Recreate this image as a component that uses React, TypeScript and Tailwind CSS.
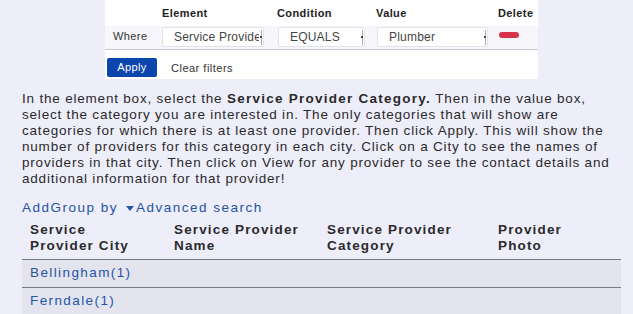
import React from "react";

const font = { fontFamily: '"Liberation Sans", Arial, sans-serif' };

function FakeSelect({ value, width }: { value: string; width: string }) {
  return (
    <div
      className={`relative flex h-[20px] items-center overflow-hidden rounded-[2px] border border-[#e2e2ea] bg-white pl-[11px] text-[12px] tracking-[0.2px] text-[#444] ${width}`}
    >
      <span className="whitespace-nowrap">{value}</span>
      <span className="absolute right-0 top-0 h-full w-[4px] bg-white" />
      <span className="absolute right-[1px] top-[2px] h-[15px] w-[1px] bg-[#aaa]" />
      <span className="absolute right-[1px] top-[8px] h-[2px] w-[2px] bg-[#444]" />
    </div>
  );
}

export default function App() {
  const rows = ["Bellingham(1)", "Ferndale(1)"];
  return (
    <div className="h-[314px] w-[633px] overflow-hidden bg-[#eeeefa]" style={font}>
      <div className="ml-[105px] w-[433px] bg-white">
        <div className="flex h-[26px] items-center text-[11px] font-bold tracking-[0.4px] text-[#222]">
          <span className="ml-[57px] w-[115px]">Element</span>
          <span className="w-[99px]">Condition</span>
          <span className="w-[122px]">Value</span>
          <span>Delete</span>
        </div>
        <div className="flex h-[24px] items-start border-b border-[#c8c8d0] bg-[#f6f6fb] pt-[1px] text-[11px] tracking-[0.4px] text-[#333]">
          <span className="ml-[8px] mt-[1px] w-[49px]">Where</span>
          <FakeSelect value="Service Provider Category" width="w-[102px]" />
          <div className="w-[14px]" />
          <FakeSelect value="EQUALS" width="w-[87px]" />
          <div className="w-[12px]" />
          <FakeSelect value="Plumber" width="w-[111px]" />
          <span className="ml-[11px] mt-[5px] h-[6px] w-[20px] rounded-full bg-[#d6334a]" />
        </div>
        <div className="flex h-[29px] items-start pt-[8px]">
          <button className="ml-[2px] h-[19px] w-[50px] rounded-[2px] bg-[#0b45ad] text-[11px] tracking-[0.4px] text-white">
            Apply
          </button>
          <span className="ml-[14px] mt-[2px] text-[11px] tracking-[0.5px] text-[#333]">
            Clear filters
          </span>
        </div>
      </div>

      <p className="ml-[22px] mt-[12px] w-[620px] whitespace-nowrap text-[13.5px] leading-[16px] tracking-[0.8px] text-[#2a2a2a]">
        In the element box, select the <b className="tracking-[1.25px]">Service Provider Category.</b>{" "}
        Then in the value box,
        <br />
        select the category you are interested in. The only categories that will show are
        <br />
        categories for which there is at least one provider. Then click Apply. This will show the
        <br />
        number of providers for this category in each city. Click on a City to see the names of
        <br />
        providers in that city. Then click on View for any provider to see the contact details and
        <br />
        additional information for that provider!
      </p>

      <div className="ml-[22px] mt-[13px] flex h-[16px] items-center text-[13.5px] tracking-[1.5px] text-[#2454a4]">
        <span>AddGroup by</span>
        <svg className="ml-[8px] mr-[2px]" width="8" height="5" viewBox="0 0 8 5">
          <path d="M0 0H8L4 5Z" fill="#2454a4" />
        </svg>
        <span>Advanced search</span>
      </div>

      <div className="ml-[22px] mt-[6px] w-[599px]">
        <div className="flex border-b border-[#7a7a86] pb-[5px] text-[13.5px] font-bold leading-[16px] tracking-[1.15px] text-[#2a2a2a]">
          <div className="w-[152px] pl-[8px]">
            Service
            <br />
            Provider City
          </div>
          <div className="w-[153px]">
            Service Provider
            <br />
            Name
          </div>
          <div className="w-[171px]">
            Service Provider
            <br />
            Category
          </div>
          <div>
            Provider
            <br />
            Photo
          </div>
        </div>
        {rows.map((r) => (
          <div
            key={r}
            className="flex h-[28px] items-center border-b border-[#7a7a86] bg-[#e4e4ef] pl-[8px] text-[13.5px] tracking-[1.4px] text-[#2454a4]"
          >
            {r}
          </div>
        ))}
      </div>
    </div>
  );
}
